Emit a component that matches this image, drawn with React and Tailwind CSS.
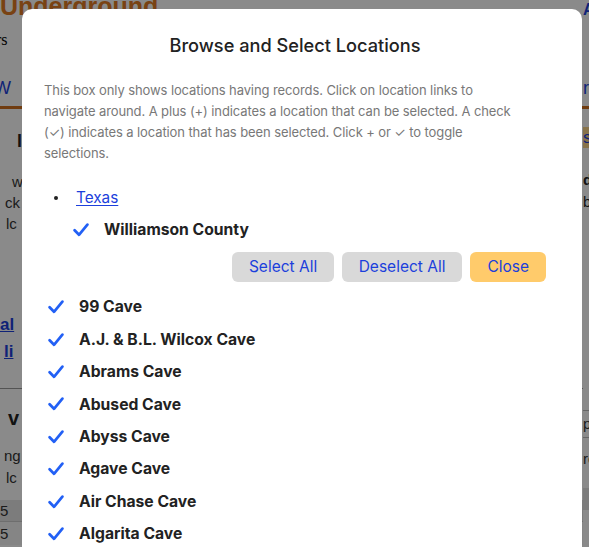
import React from "react";

function Check() {
  return (
    <svg width="16" height="14" viewBox="0 0 16 14" className="shrink-0">
      <path d="M1.6 7.2 L6 11.8 L14.4 1.6" fill="none" stroke="#2260f5" strokeWidth="2.7" strokeLinecap="round" strokeLinejoin="round" />
    </svg>
  );
}

const caves = [
  "99 Cave",
  "A.J. & B.L. Wilcox Cave",
  "Abrams Cave",
  "Abused Cave",
  "Abyss Cave",
  "Agave Cave",
  "Air Chase Cave",
  "Algarita Cave",
  "Alligator Cave",
  "Alma Cave",
];

function Background() {
  return (
    <div className="h-[547px] overflow-hidden bg-white grid grid-cols-[583px_1fr]" style={{ fontFamily: '"Liberation Sans", Arial, sans-serif' }}>
      <div className="flex flex-col whitespace-nowrap overflow-hidden">
        <div className="h-[24px] overflow-visible">
          <div className="-mt-[6px] text-[25px] leading-[25px] font-bold text-[#e07a24]">Underground</div>
        </div>
        <div className="mt-[7px] h-[18px] -ml-[4px] text-[16px] leading-[18px] text-black" style={{ fontFamily: '"Liberation Serif", serif' }}>rs</div>
        <div className="mt-[29px] h-[20px] -ml-[6px] text-[18px] leading-[20px] text-[#1c3fdc]">W</div>
        <div className="mt-[8px] h-[3px] bg-[#d0701e]" />
        <div className="mt-[23px] h-[18px] pl-[17px] text-[18px] leading-[18px] font-bold text-[#222]">l</div>
        <div className="mt-[21px] text-[15px] leading-[21px] text-[#333]">
          <div className="pl-[12px]">w</div>
          <div className="pl-[5px]">ck</div>
          <div className="pl-[6px]">lc</div>
        </div>
        <div className="mt-[77px] text-[17px] leading-[27px] font-bold text-[#1c3fdc] underline">
          <div>al</div>
          <div className="pl-[4px]">li</div>
        </div>
        <div className="mt-[23px] h-px bg-[#999]" />
        <div className="mt-[18px] pl-[8px] text-[20px] leading-[22px] font-bold text-[#222]">v</div>
        <div className="mt-[16px] text-[15px] leading-[22px] text-[#333]">
          <div className="pl-[4px]">ng</div>
          <div className="pl-[6px]">lc</div>
        </div>
        <div className="mt-[11px] h-[21px] bg-[#e6e6e6] text-[15px] leading-[21px] text-[#333]">5</div>
        <div className="h-[24px] bg-[#f5f5f5] text-[15px] leading-[24px] text-[#333] border-t border-[#ccc]">5</div>
      </div>
      <div className="flex flex-col whitespace-nowrap overflow-hidden">
        <div className="h-[24px] text-[16px] leading-[20px] text-[#1c3fdc] font-bold">A</div>
        <div className="mt-[54px] h-[20px] text-[18px] leading-[20px] text-[#1c3fdc]">ri</div>
        <div className="mt-[8px] h-[3px] bg-[#d0701e]" />
        <div className="mt-[18px] h-[21px] bg-[#fbd58a] text-[17px] leading-[21px] text-[#1c3fdc]">se</div>
        <div className="mt-[21px] text-[15px] leading-[22px] text-[#222]">
          <div className="font-bold">d</div>
          <div>b</div>
        </div>
        <div className="mt-[197px] h-px bg-[#bbb]" />
        <div className="h-[26px] text-[15px] leading-[26px] text-[#333]">pe</div>
        <div className="h-px bg-[#bbb]" />
        <div className="mt-[10px] h-[22px] text-[15px] leading-[22px] text-[#333]">ro</div>
        <div className="mt-[18px] h-[22px] bg-[#e6e6e6]" />
      </div>
    </div>
  );
}

export default function App() {
  return (
    <div className="relative h-[547px] overflow-hidden">
      <Background />
      <div className="fixed inset-0 bg-black/[0.46] overflow-hidden">
        <div
          className="ml-[22px] mt-[9px] w-[560px] h-[620px] bg-white rounded-[10px] pl-[22px] pr-[36px] pt-[23px]"
          style={{ fontFamily: 'Inter, "Noto Sans", sans-serif' }}
        >
          <h2 className="text-center text-[18.2px] font-medium leading-[27px] text-[#222]">Browse and Select Locations</h2>
          <p className="mt-[21px] w-[478px] text-[13px] tracking-[-0.1px] leading-[21px] text-[#787878]">
            This box only shows locations having records. Click on location links to navigate around. A plus (+) indicates a location that can be selected. A check (✓) indicates a location that has been selected. Click + or ✓ to toggle selections.
          </p>
          <div className="mt-[23px]">
            <div className="flex items-center h-[22px]">
              <span className="ml-[10px] w-[4px] h-[4px] rounded-full bg-[#222]" />
              <a href="#" className="ml-[18px] text-[15.3px] leading-[22px] text-[#1c3fdc] underline underline-offset-2">Texas</a>
            </div>
            <div className="mt-[10px] flex items-center h-[22px] pl-[29px]">
              <Check />
              <span className="ml-[15px] text-[15.7px] font-bold text-[#222]">Williamson County</span>
            </div>
          </div>
          <div className="mt-[11px] flex justify-end gap-[8px]">
            <button className="h-[30px] px-[16.5px] rounded-[6px] bg-[#d9d9d9] text-[15.5px] text-[#1c3fdc]">Select All</button>
            <button className="h-[30px] px-[17px] rounded-[6px] bg-[#d9d9d9] text-[15.5px] text-[#1c3fdc]">Deselect All</button>
            <button className="h-[30px] px-[17px] rounded-[6px] bg-[#ffcb6b] text-[15.5px] text-[#1c3fdc]">Close</button>
          </div>
          <ul className="mt-[9px]">
            {caves.map((c) => (
              <li key={c} className="flex items-center h-[32.4px] pl-[4px]">
                <Check />
                <span className="ml-[15px] text-[15.7px] font-bold text-[#222]">{c}</span>
              </li>
            ))}
          </ul>
        </div>
      </div>
    </div>
  );
}
